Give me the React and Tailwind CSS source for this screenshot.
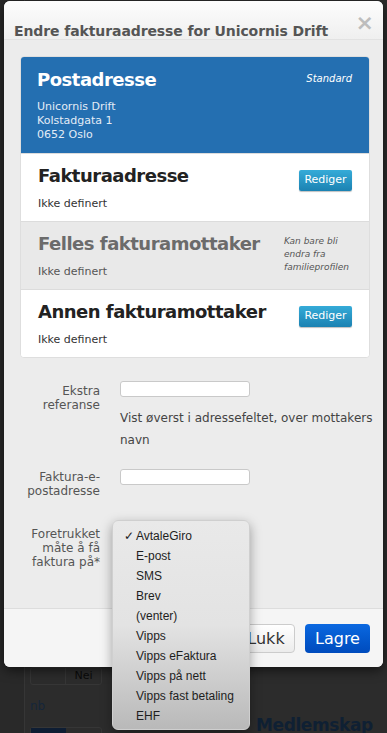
import React from 'react';

const sans = { fontFamily: '"DejaVu Sans", Verdana, sans-serif' };

const options = [
  'AvtaleGiro',
  'E-post',
  'SMS',
  'Brev',
  '(venter)',
  'Vipps',
  'Vipps eFaktura',
  'Vipps på nett',
  'Vipps fast betaling',
  'EHF',
];

const RedigerButton = () => (
  <button className="h-[21px] w-[53px] rounded-[2px] bg-gradient-to-b from-[#35abd8] to-[#1b82b2] text-[11px] text-white shadow-[0_1px_1px_rgba(0,0,0,0.25)]">
    Rediger
  </button>
);

const Section = ({ title, muted, right }) => (
  <div
    className={`flex items-start justify-between pl-[17px] pr-[17px] pt-[10px] pb-[10px] border-t border-[#dcdcdc] ${
      muted ? 'bg-[#e9e9e9]' : 'bg-white'
    }`}
  >
    <div>
      <h3
        className={`whitespace-nowrap text-[18px] leading-[24px] tracking-[-0.5px] font-bold ${
          muted ? 'text-[#6b6b6b]' : 'text-[#222]'
        }`}
      >
        {title}
      </h3>
      <p className={`mt-[9px] text-[11px] leading-[14px] ${muted ? 'text-[#555]' : 'text-[#333]'}`}>Ikke definert</p>
    </div>
    {right}
  </div>
);

const Background = () => (
  <div className="absolute inset-0 flex bg-[#2c2c2c]">
    <div className="w-[25px] h-full bg-[#292929] border-r border-[#363636]" />
    <div className="flex-1 pt-[667px] pl-[5px]">
      <div className="flex h-[18px] w-[72px] rounded-[3px] border border-[#363636] text-[11px] text-[#0a0a0a]" style={sans}>
        <div className="w-[35px] border-r border-[#363636]" />
        <div className="flex-1 flex items-center justify-center">Nei</div>
      </div>
      <div className="mt-[12px] text-[12px] text-[#15263a]" style={sans}>nb</div>
      <div className="mt-[12px] flex h-[18px] w-[72px] rounded-[3px] border border-[#363636]">
        <div className="w-[35px] bg-[#0e1d33]" />
      </div>
    </div>
    <div className="absolute left-[256px] top-[713px] text-[17px] tracking-[-0.4px] font-bold text-[#0f2033]" style={sans}>
      Medlemskap
    </div>
  </div>
);

export default function App() {
  return (
    <div className="relative w-[387px] h-[733px] overflow-hidden">
      <Background />

      {/* Modal */}
      <div
        className="absolute left-[4px] top-[1px] w-[379px] h-[666px] flex flex-col rounded-[6px] overflow-hidden bg-[#ececec] shadow-[0_3px_12px_rgba(0,0,0,0.6)]"
        style={sans}
      >
        <div className="h-[39px] shrink-0 flex items-start justify-between pl-[10px] pr-[9px] bg-gradient-to-b from-[#fdfdfd] to-[#efefef] border-b border-[#e2e2e2]">
          <h2 className="mt-[20px] whitespace-nowrap text-[14px] leading-[20px] tracking-[-0.1px] font-bold text-[#555]">
            Endre fakturaadresse for Unicornis Drift
          </h2>
          <span className="mt-[12px] text-[22px] leading-[20px] font-bold text-[#bdbdbd]">×</span>
        </div>

        <div className="flex-1 pl-[16px] pt-[16px]">
          <div className="w-[350px] rounded-[4px] overflow-hidden border border-[#dedede] bg-white">
            <div className="flex items-start justify-between bg-[#246fb1] pl-[16px] pr-[17px] pt-[11px] pb-[11px] text-white">
              <div>
                <h3 className="text-[18px] leading-[24px] tracking-[-0.5px] font-bold">Postadresse</h3>
                <div className="mt-[8px] text-[11px] leading-[14px] text-[#e3ecf6]">
                  <p>Unicornis Drift</p>
                  <p>Kolstadgata 1</p>
                  <p>0652 Oslo</p>
                </div>
              </div>
              <span className="mt-[3px] text-[10px] italic">Standard</span>
            </div>
            <Section title="Fakturaadresse" right={<div className="pt-[2px]"><RedigerButton /></div>} />
            <Section
              title="Felles fakturamottaker"
              muted
              right={
                <p className="mt-[3px] w-[68px] text-[9px] leading-[13px] italic text-[#555]">
                  Kan bare bli endra fra familieprofilen
                </p>
              }
            />
            <Section title="Annen fakturamottaker" right={<div className="pt-[2px]"><RedigerButton /></div>} />
          </div>

          <div className="mt-[23px] grid grid-cols-[80px_1fr] gap-x-[20px] text-[12px] leading-[14px] text-[#555]">
            <label className="pt-[3px] text-right">Ekstra referanse</label>
            <div>
              <div className="h-[16px] w-[130px] rounded-[3px] border border-[#c9c9c9] bg-white" />
              <p className="mt-[10px] text-[#444] leading-[22px]">Vist øverst i adressefeltet, over mottakers navn</p>
            </div>

            <label className="mt-[18px] pt-[1px] text-right">Faktura-e-postadresse</label>
            <div className="mt-[18px]">
              <div className="h-[16px] w-[130px] rounded-[3px] border border-[#c9c9c9] bg-white" />
            </div>

            <label className="mt-[29px] text-right">Foretrukket måte å få faktura på*</label>
            <div />
          </div>
        </div>

        <div className="h-[59px] shrink-0 flex items-center justify-end gap-[10px] pr-[13px] pt-[1px] bg-[#f5f5f5] border-t border-[#dddddd]">
          <button className="h-[29px] w-[58px] rounded-[4px] border border-[#cccccc] bg-gradient-to-b from-white to-[#ececec] text-[16px] text-[#333]">
            Lukk
          </button>
          <button className="h-[29px] w-[65px] rounded-[4px] bg-gradient-to-b from-[#0b68e0] to-[#004bbd] text-[16px] text-white">
            Lagre
          </button>
        </div>
      </div>

      {/* Open native select menu */}
      <div
        className="absolute left-[112px] top-[520px] w-[138px] h-[210px] rounded-[6px] border border-[#cfcfcf] bg-gradient-to-b from-[#e9e9e9] via-[#e3e3e3] to-[#b9b9b9] py-[5px] shadow-[0_4px_12px_rgba(0,0,0,0.35)]"
        style={{ fontFamily: '"Liberation Sans", Arial, sans-serif' }}
      >
        {options.map((o, i) => (
          <div key={o} className="relative h-[20px] flex items-center pl-[23px] text-[12px] text-[#1e1e1e]">
            {i === 0 && <span className="absolute left-[11px] text-[12px]">✓</span>}
            {o}
          </div>
        ))}
      </div>
    </div>
  );
}
